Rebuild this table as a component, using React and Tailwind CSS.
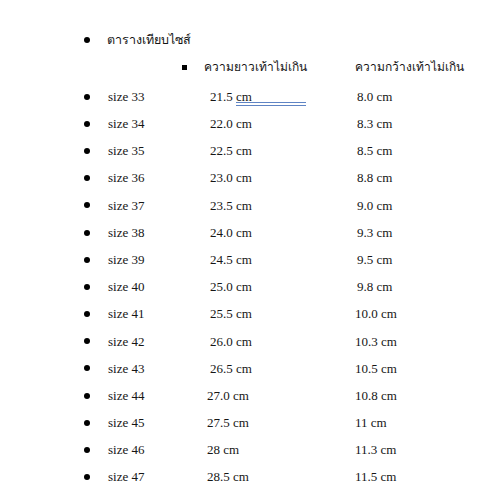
import React from 'react';

const rows = [
  { size: 'size 33', len: '21.5 cm', wid: '8.0 cm', shift: 'pl-[3px]', wshift: 'pl-[2px]', mark: true },
  { size: 'size 34', len: '22.0 cm', wid: '8.3 cm', shift: 'pl-[3px]', wshift: 'pl-[2px]' },
  { size: 'size 35', len: '22.5 cm', wid: '8.5 cm', shift: 'pl-[3px]', wshift: 'pl-[2px]' },
  { size: 'size 36', len: '23.0 cm', wid: '8.8 cm', shift: 'pl-[3px]', wshift: 'pl-[2px]' },
  { size: 'size 37', len: '23.5 cm', wid: '9.0 cm', shift: 'pl-[3px]', wshift: 'pl-[2px]' },
  { size: 'size 38', len: '24.0 cm', wid: '9.3 cm', shift: 'pl-[3px]', wshift: 'pl-[2px]' },
  { size: 'size 39', len: '24.5 cm', wid: '9.5 cm', shift: 'pl-[3px]', wshift: 'pl-[2px]' },
  { size: 'size 40', len: '25.0 cm', wid: '9.8 cm', shift: 'pl-[3px]', wshift: 'pl-[2px]' },
  { size: 'size 41', len: '25.5 cm', wid: '10.0 cm', shift: 'pl-[3px]', wshift: 'pl-0' },
  { size: 'size 42', len: '26.0 cm', wid: '10.3 cm', shift: 'pl-[3px]', wshift: 'pl-0' },
  { size: 'size 43', len: '26.5 cm', wid: '10.5 cm', shift: 'pl-[3px]', wshift: 'pl-0' },
  { size: 'size 44', len: '27.0 cm', wid: '10.8 cm', shift: 'pl-0', wshift: 'pl-0' },
  { size: 'size 45', len: '27.5 cm', wid: '11 cm', shift: 'pl-0', wshift: 'pl-0' },
  { size: 'size 46', len: '28 cm', wid: '11.3 cm', shift: 'pl-0', wshift: 'pl-0' },
  { size: 'size 47', len: '28.5 cm', wid: '11.5 cm', shift: 'pl-0', wshift: 'pl-0' },
];

const Dot = () => <span className="block w-[6px] h-[6px] rounded-full bg-black" />;

export default function App() {
  return (
    <div className="w-[500px] h-[500px] bg-white text-[#161616] text-[13px] overflow-hidden font-['Liberation_Serif','Noto_Sans_Thai',serif]">
      <div className="pt-[29px]">
        <div className="flex items-center h-[22px] pl-[84px]">
          <span className="w-[23px]"><Dot /></span>
          <span className="font-['Tahoma','DejaVu_Sans',sans-serif] text-[12.5px]">ตารางเทียบไซส์</span>
        </div>
        <div className="flex items-center h-[22px] mt-[5px] pl-[182px]">
          <span className="w-[22px]"><span className="block w-[5px] h-[5px] bg-black" /></span>
          <span className="w-[151px] font-['Tahoma','DejaVu_Sans',sans-serif] text-[12px]">ความยาวเท้าไม่เกิน</span>
          <span className="font-['Tahoma','DejaVu_Sans',sans-serif] text-[12px]">ความกว้างเท้าไม่เกิน</span>
        </div>
        <div className="mt-[5px] flex flex-col">
          {rows.map((r) => (
            <div key={r.size} className="flex items-center h-[27.2px] pl-[84px]">
              <span className="w-[24px]"><Dot /></span>
              <span className="w-[99px]">{r.size}</span>
              <span className={`w-[148px] ${r.shift}`}>
                {r.mark ? (
                  <>
                    21.5{' '}
                    <span className="relative">
                      cm
                      <span className="absolute left-0 top-[13px] w-[70px] h-[4px] border-y border-[#5f84c4]" />
                    </span>
                  </>
                ) : (
                  r.len
                )}
              </span>
              <span className={r.wshift}>{r.wid}</span>
            </div>
          ))}
        </div>
      </div>
    </div>
  );
}
